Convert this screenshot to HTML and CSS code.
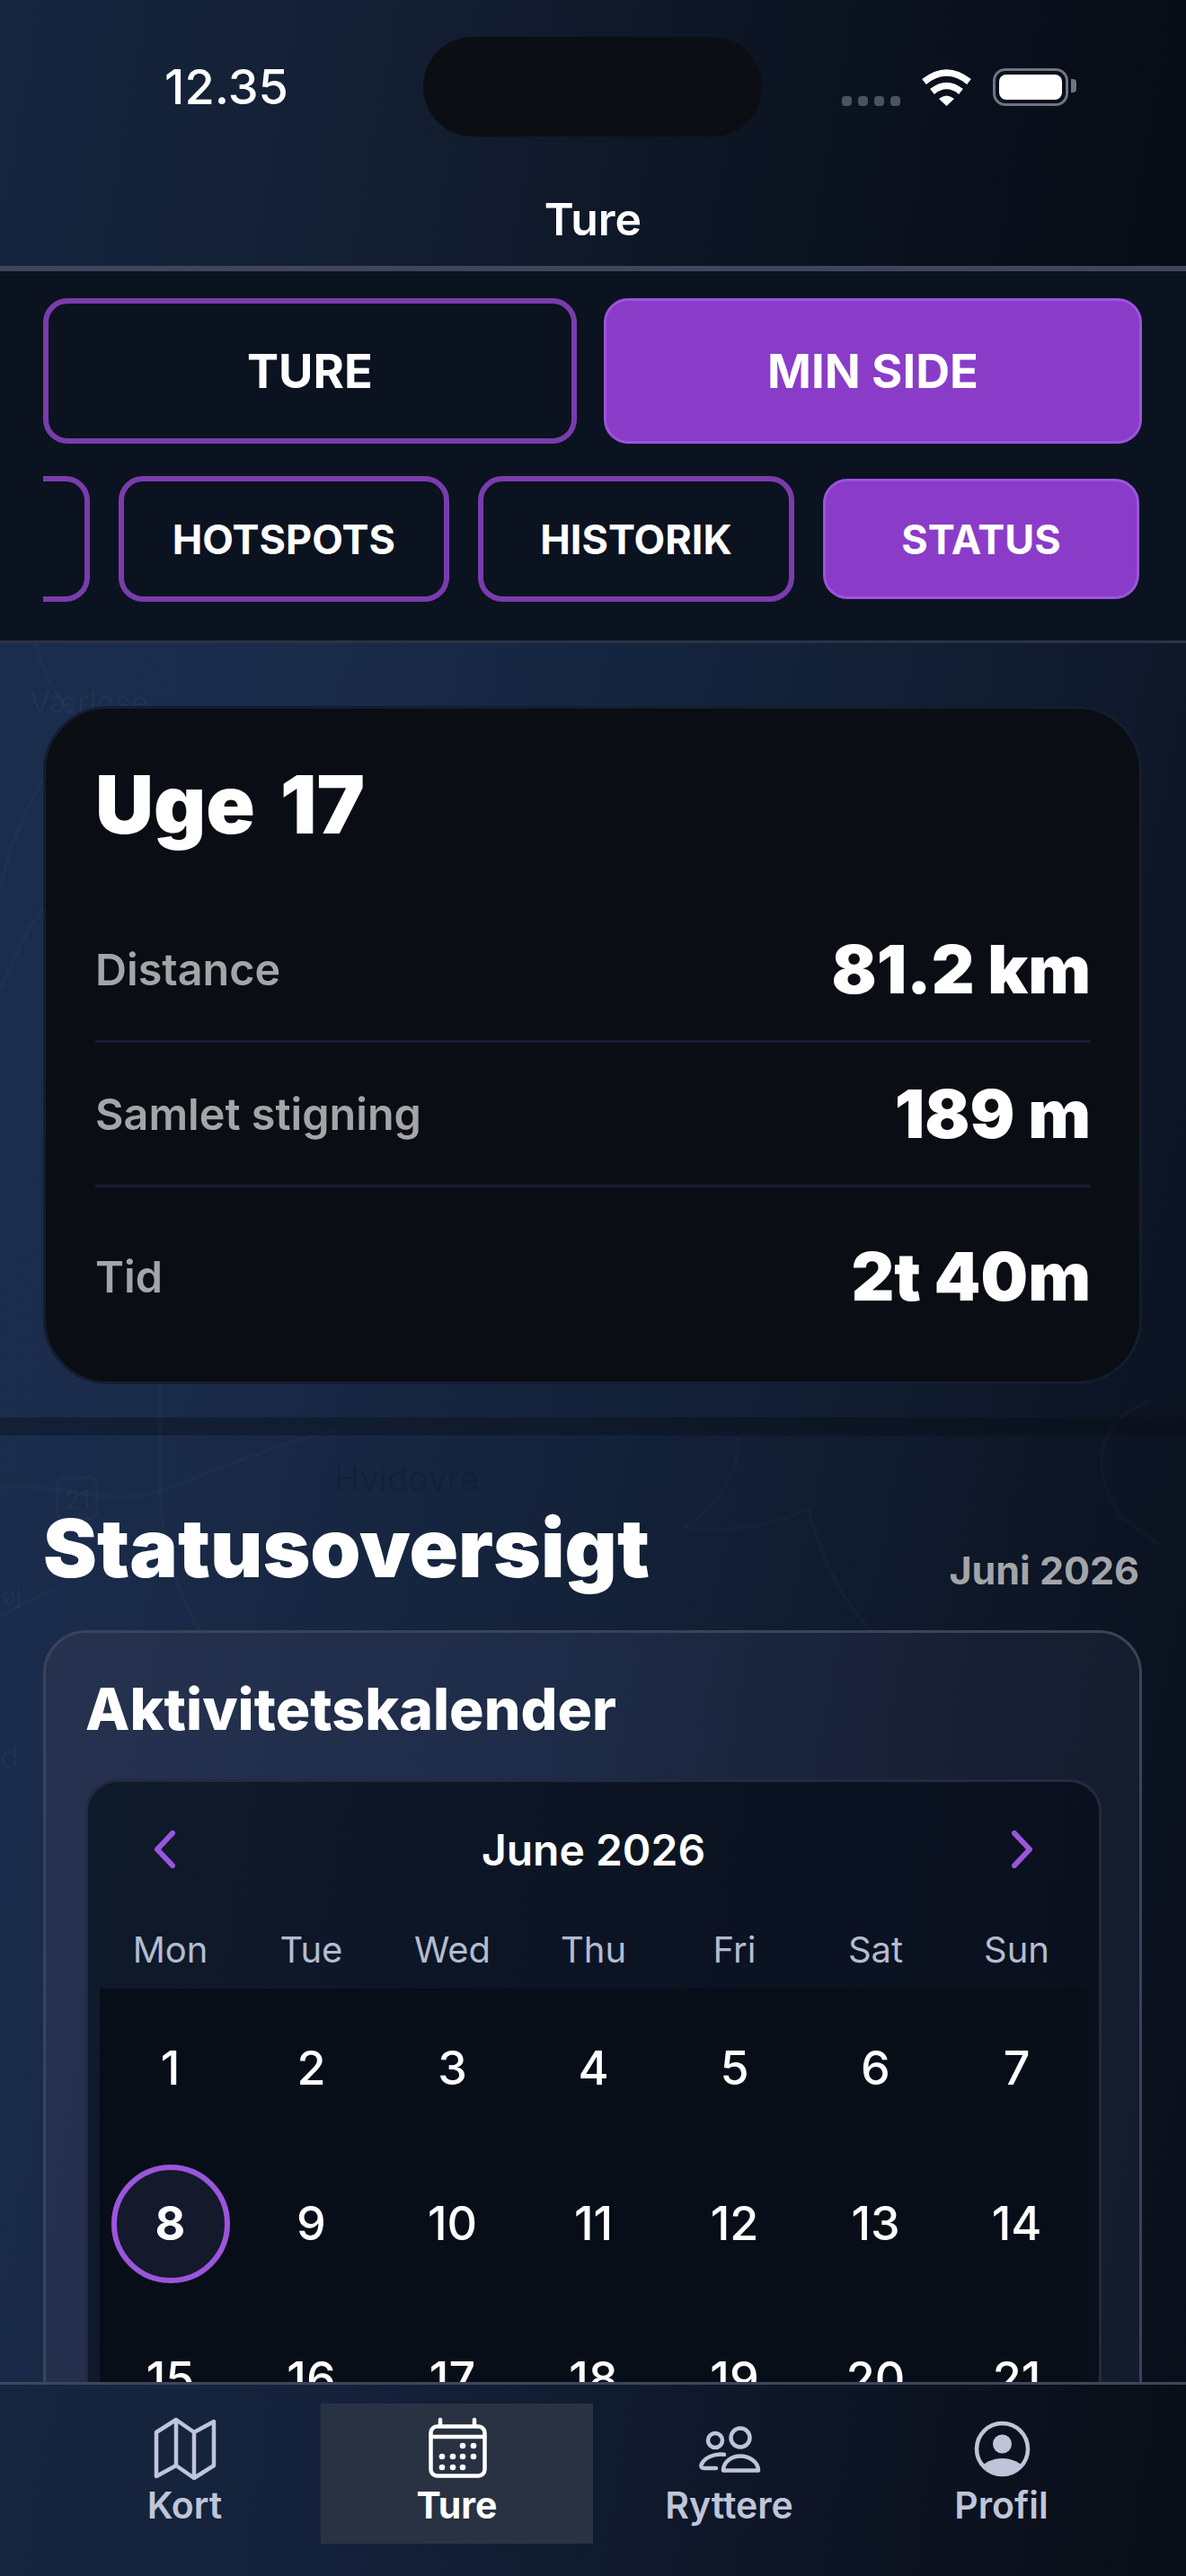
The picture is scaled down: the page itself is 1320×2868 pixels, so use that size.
FILE: index.html
```html
<!DOCTYPE html>
<html lang="da">
<head>
    <meta charset="UTF-8">
    <meta name="viewport" content="width=device-width, initial-scale=1.0">
    <title>Ture - Status</title>
    <link rel="stylesheet" href="styles.css">
</head>
<body>

    <div class="app">
        <svg class="map" viewBox="0 0 1320 2868" aria-hidden="true">
            <g class="map-roads">
                <path d="M40 716 C50 760 70 790 90 800 C60 850 20 900 0 990"/>
                <path d="M0 1100 C20 1060 30 1030 50 1010"/>
                <path d="M178 1540 V1660 C180 1720 200 1800 250 1850 C290 1880 340 1890 400 1880"/>
                <path d="M0 1655 C60 1650 120 1680 180 1660 C230 1640 300 1610 380 1590"/>
                <path d="M0 1800 C20 1790 40 1775 60 1770"/>
                <path d="M820 1600 C830 1630 790 1690 760 1700"/>
                <path d="M760 1700 C820 1710 880 1690 900 1680 C920 1760 960 1830 1040 1860"/>
                <path d="M1280 1560 C1220 1580 1210 1640 1250 1690 L1290 1720"/>
                <rect x="64" y="1645" width="44" height="46" rx="8"/>
                <rect x="370" y="1840" width="44" height="40" rx="8"/>
                <rect x="1184" y="1888" width="50" height="36" rx="8"/>
            </g>
            <g class="map-labels">
                <text class="map-label light" x="33" y="794" font-size="34">Værløse</text>
                <text class="map-label dark" x="372" y="1660" font-size="38">Hvidovre</text>
                <text class="map-label dim" x="888" y="1672" font-size="34">Kastrup</text>
                <text class="map-label dim" x="950" y="1735" font-size="34">Københavns</text>
                <text class="map-label dim" x="950" y="1775" font-size="34">Lufthavn (CPH)</text>
                <text class="map-label dim" x="1232" y="1695" font-size="36">altho</text>
                <text class="map-label dim" x="712" y="1870" font-size="38">Amager</text>
                <text class="map-label dim" x="1000" y="1912" font-size="34">Dragør</text>
                <text class="map-label light" x="2" y="1786" font-size="26">øj</text>
                <text class="map-label light" x="0" y="1968" font-size="34">d</text>
                <text class="map-label light" x="72" y="1680" font-size="28">21</text>
                <text class="map-label dark" x="376" y="1872" font-size="28">20</text>
            </g>
        </svg>

        <header class="top-bar">
            <div class="status-bar">
                <span class="clock">12.35</span>
                <div class="island"></div>
                <div class="status-icons">
                    <div class="signal"><i></i><i></i><i></i><i></i></div>
                    <svg class="wifi" viewBox="0 0 57 41">
                        <path d="M3.5 14 Q28.5 -6 53.5 14" fill="none" stroke="#fff" stroke-width="7.5"/>
                        <path d="M12.5 25 Q28.5 12 44.5 25" fill="none" stroke="#fff" stroke-width="7.5"/>
                        <path d="M20 33 Q28.5 26 37 33 L28.5 41 Z" fill="#fff"/>
                    </svg>
                    <div class="battery"><div class="battery-level"></div></div>
                </div>
            </div>
            <div class="page-title">Ture</div>
        </header>

        <div class="tabs">
            <div class="tabs-main">
                <button class="tab">TURE</button>
                <button class="tab active">MIN SIDE</button>
            </div>
            <div class="tabs-sub">
                <button class="tab small"></button>
                <button class="tab small">HOTSPOTS</button>
                <button class="tab small">HISTORIK</button>
                <button class="tab small active">STATUS</button>
            </div>
        </div>

        <main class="content">
            <section class="week-section">
                <div class="week-card">
                    <h2 class="week-title">Uge 17</h2>
                    <div class="stat-row"><span class="stat-label">Distance</span><span class="stat-value">81.2 km</span></div>
                    <div class="stat-row"><span class="stat-label">Samlet stigning</span><span class="stat-value">189 m</span></div>
                    <div class="stat-row last"><span class="stat-label">Tid</span><span class="stat-value">2t 40m</span></div>
                </div>
            </section>

            <div class="band"></div>

            <section class="status-section">
                <div class="status-head">
                    <h1 class="status-title">Statusoversigt</h1>
                    <span class="status-month">Juni 2026</span>
                </div>

                <div class="calendar-card">
                    <h3 class="calendar-heading">Aktivitetskalender</h3>
                    <div class="calendar">
                        <div class="calendar-nav">
                            <svg class="chevron" viewBox="0 0 26 42"><path d="M22 3 L5 21 L22 39"/></svg>
                            <span class="calendar-month">June 2026</span>
                            <svg class="chevron" viewBox="0 0 26 42"><path d="M4 3 L21 21 L4 39"/></svg>
                        </div>
                        <div class="weekdays">
                            <span>Mon</span><span>Tue</span><span>Wed</span><span>Thu</span><span>Fri</span><span>Sat</span><span>Sun</span>
                        </div>
                        <div class="days">
                            <span>1</span><span>2</span><span>3</span><span>4</span><span>5</span><span>6</span><span>7</span>
                            <span><b class="today">8</b></span><span>9</span><span>10</span><span>11</span><span>12</span><span>13</span><span>14</span>
                            <span>15</span><span>16</span><span>17</span><span>18</span><span>19</span><span>20</span><span>21</span>
                        </div>
                    </div>
                </div>
            </section>
        </main>

        <nav class="bottom-nav">
            <a class="nav-item">
                <svg class="nav-icon" viewBox="0 0 72 72">
                    <path class="line" d="M4 18 L26 4 L46 18 L68 6 V55 L46 69 L26 55 L4 67 Z M26 4 V55 M46 18 V69"/>
                </svg>
                <span>Kort</span>
            </a>
            <a class="nav-item active">
                <svg class="nav-icon" viewBox="0 0 72 72">
                    <rect class="line" x="6.5" y="11.5" width="60" height="55" rx="7"/>
                    <path class="line" d="M6.5 23 H66.5 M17 4 V10 M55 4 V10"/>
                    <g class="fill">
                        <circle cx="42" cy="33" r="3.3"/><circle cx="54" cy="33" r="3.3"/>
                        <circle cx="19" cy="45" r="3.3"/><circle cx="31" cy="45" r="3.3"/><circle cx="42" cy="45" r="3.3"/><circle cx="54" cy="45" r="3.3"/>
                        <circle cx="19" cy="57" r="3.3"/><circle cx="31" cy="57" r="3.3"/><circle cx="42" cy="57" r="3.3"/>
                    </g>
                </svg>
                <span>Ture</span>
            </a>
            <a class="nav-item">
                <svg class="nav-icon" viewBox="0 0 72 72">
                    <circle class="line" cx="20" cy="27" r="8"/>
                    <circle class="line" cx="48" cy="24" r="10.5"/>
                    <path class="line" d="M29 60.5 C29 51 38 44.5 48 44.5 C58 44.5 68 51 68 60.5 Z"/>
                    <path class="line" d="M30 42.8 C20 41 8 46 4.5 54 Q3.5 58 8 58 H21"/>
                </svg>
                <span>Ryttere</span>
            </a>
            <a class="nav-item">
                <svg class="nav-icon" viewBox="0 0 72 72">
                    <circle class="line" cx="36.5" cy="36.5" r="28.5"/>
                    <circle class="fill" cx="36.5" cy="31" r="10.5"/>
                    <path class="fill" d="M14 55 C20 50 28 47 36.5 47 C45 47 53 50 59 55 A29 29 0 0 1 14 55 Z"/>
                </svg>
                <span>Profil</span>
            </a>
        </nav>
    </div>

</body>
</html>
```
FILE: styles.css
```css
:root {
    --bg-dark: #0b1220;
    --purple: #8a3cc8;
    --purple-line: #7a3cab;
    --purple-light: #9b55de;
    --text-gray: #a3a5a8;
    --text-nav: #bfc5d9;
    --card-black: #0a0e14;
    --font-family: 'Inter', 'Liberation Sans', sans-serif;
}
*, *::before, *::after { box-sizing: border-box; }
body { margin: 0; font-family: var(--font-family); color: #fff; background-color: var(--bg-dark); }
h1, h2, h3 { margin: 0; }

.app {
    position: relative; height: 100vh; overflow: hidden;
    display: flex; flex-direction: column;
    background: linear-gradient(102deg, #1b2e4f 0%, #1a2b4a 25%, #14233b 50%, #0e1829 75%, #090e18 100%);
}
.map { position: absolute; top: 0; left: 0; width: 1320px; height: 2868px; }
.map-roads path, .map-roads rect { fill: none; stroke: rgba(255, 255, 255, 0.018); stroke-width: 4; }
.map-label.light { fill: rgba(255, 255, 255, 0.04); }
.map-label.dark { fill: rgba(8, 16, 32, 0.22); }
.map-label.dim { fill: rgba(255, 255, 255, 0.025); }

.top-bar {
    position: relative; height: 302px; flex-shrink: 0;
    background: linear-gradient(100deg, #16263f 0%, #131f33 30%, #0c1422 65%, #070b14 100%);
    border-bottom: 6px solid #3f465c;
}
.status-bar { display: flex; align-items: center; padding: 41px 0 0 183px; }
.clock { width: 288px; font-size: 54px; font-weight: 500; }
.island { width: 377px; height: 111px; border-radius: 56px; background-color: #0b0e13; }
.status-icons { display: flex; align-items: flex-end; gap: 23px; margin-left: 89px; }
.signal { display: flex; gap: 7px; }
.signal i { width: 11px; height: 11px; border-radius: 4px; background-color: #4b5263; }
.wifi { width: 57px; height: 41px; display: block; }
.battery {
    position: relative; width: 84px; height: 42px; padding: 4px;
    border: 3px solid #6f7482; border-radius: 14px;
}
.battery::after {
    content: ''; position: absolute; top: 9px; right: -12px;
    width: 6px; height: 15px; border-radius: 0 4px 4px 0; background-color: #6f7482;
}
.battery-level { height: 100%; border-radius: 8px; background-color: #fff; }
.page-title { padding: 63px 0 23px; text-align: center; font-size: 50px; line-height: 58px; font-weight: 600; }

.tabs {
    position: relative; height: 414px; flex-shrink: 0; padding-top: 30px;
    background-color: var(--bg-dark); border-bottom: 3px solid #2a3245;
}
.tabs-main { display: grid; grid-template-columns: 594px 599px; gap: 30px; height: 162px; padding-left: 48px; }
.tabs-sub { display: flex; justify-content: flex-end; align-items: center; gap: 32px; height: 140px; margin: 36px 52px 0 48px; overflow: hidden; }
.tab {
    font-family: inherit; font-size: 52.5px; font-weight: 700; color: #fff;
    background-color: transparent; border: 6px solid var(--purple-line); border-radius: 27px;
}
.tab.active { background-color: var(--purple); border: 3px solid var(--purple-light); }
.tab.small {
    flex-shrink: 0; min-width: 352px; height: 140px; padding: 0 54px;
    font-size: 45px; font-weight: 700;
}
.tab.small.active { height: 134px; }

.content { position: relative; flex: 1; overflow: hidden; }
.week-section { padding: 70px 49px 37px 48px; }
.week-card {
    height: 755px; padding: 57px 54px 0 55px;
    background-color: var(--card-black); border: 3px solid #141d30; border-radius: 72px;
}
.week-title { font-size: 90px; line-height: 100px; font-weight: 900; word-spacing: 10px; margin-bottom: 54px; }
.stat-row {
    display: flex; justify-content: space-between; align-items: center;
    height: 161px; border-bottom: 3px solid #141d30;
}
.stat-row.last { height: 198px; border-bottom: none; }
.stat-label { font-size: 48.5px; font-weight: 600; color: var(--text-gray); }
.stat-value { font-size: 74px; font-weight: 900; }

.band { height: 20px; background-color: rgba(8, 12, 20, 0.4); }

.status-section { padding: 76px 49px 0 48px; }
.status-head { display: flex; justify-content: space-between; align-items: flex-end; padding-right: 3px; margin-bottom: 41px; }
.status-title { font-size: 90px; line-height: 100px; font-weight: 900; }
.status-month { font-size: 43px; font-weight: 700; color: var(--text-gray); }

.calendar-card {
    height: 1000px; padding: 46px 42px 0 44px;
    background: linear-gradient(100deg, #26324f 0%, #1e2c49 40%, #171f32 75%, #131a2b 100%);
    border: 3px solid #3a4358; border-radius: 48px;
}
.calendar-heading { font-size: 64.2px; line-height: 78px; font-weight: 800; margin-bottom: 39px; }
.calendar {
    padding: 0 13px;
    background: linear-gradient(100deg, #0f1a2b 0%, #0b1322 60%, #0a0f1c 100%);
    border: 3px solid #222a3e; border-radius: 36px;
}
.calendar-nav { display: flex; justify-content: space-between; align-items: center; height: 150px; padding: 0 59px; }
.calendar-month { font-size: 48px; font-weight: 600; }
.chevron { width: 26px; height: 42px; display: block; }
.chevron path { fill: none; stroke: var(--purple-light); stroke-width: 6; stroke-linecap: round; stroke-linejoin: round; }
.weekdays, .days { display: grid; grid-template-columns: repeat(7, 157px); }
.weekdays { height: 72px; margin-bottom: 8px; align-items: center; }
.weekdays span { text-align: center; font-size: 40px; color: #b4bcd0; }
.days { grid-auto-rows: 173px; padding-top: 2px; background-color: #080e18; }
.days span { display: flex; align-items: center; justify-content: center; font-size: 52px; font-weight: 500; }
.today {
    display: flex; align-items: center; justify-content: center;
    width: 132px; height: 132px; font-weight: 700;
    background-color: #141a2b; border: 6px solid var(--purple-light); border-radius: 50%;
}

.bottom-nav {
    position: relative; height: 216px; flex-shrink: 0; padding: 21px 54px 0;
    display: flex; align-items: flex-start;
    background: linear-gradient(100deg, #16263f 0%, #14213a 30%, #0e1626 65%, #090d16 100%);
    border-top: 3px solid #3f465c;
}
.nav-item {
    display: flex; flex-direction: column; align-items: center;
    width: 303px; height: 156px; padding-top: 14px;
    font-size: 41px; font-weight: 600; line-height: 50px; color: var(--text-nav);
}
.nav-item.active { background-color: #293242; color: #fff; font-weight: 700; }
.nav-icon { width: 72px; height: 72px; margin-bottom: 2px; display: block; }
.nav-icon .line { fill: none; stroke: currentColor; stroke-width: 4.5; stroke-linejoin: round; stroke-linecap: round; }
.nav-icon .fill { fill: currentColor; }
```
